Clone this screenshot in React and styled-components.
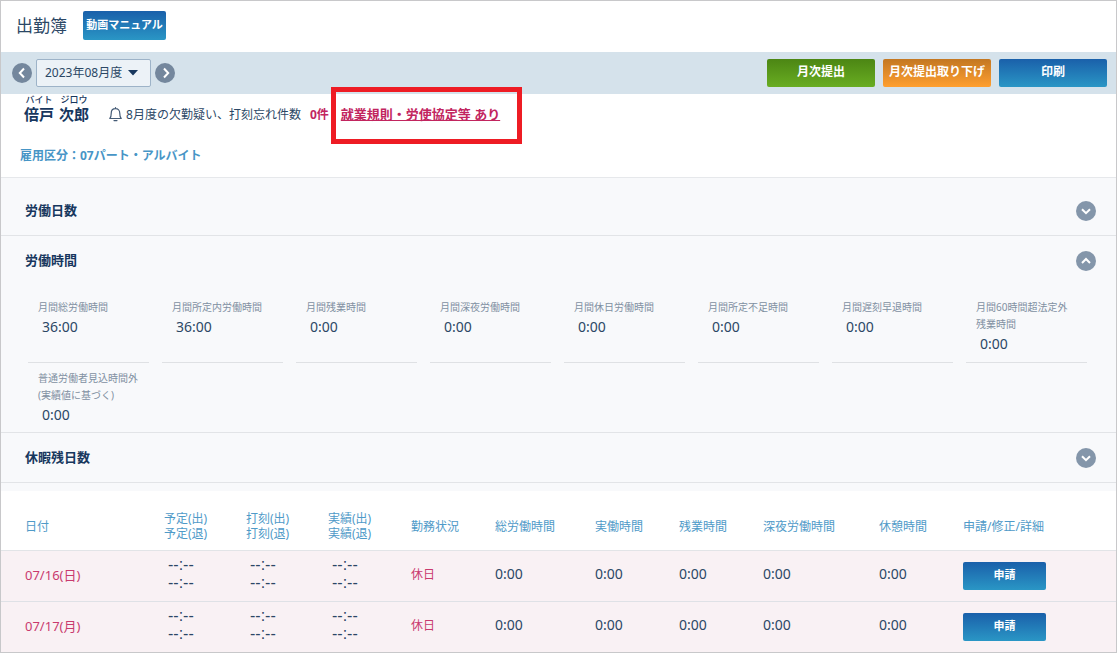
import React, { useState } from "react";
import styled, { createGlobalStyle } from "styled-components";

const summaryItems = [
  { label: ["月間総労働時間"], value: "36:00" },
  { label: ["月間所定内労働時間"], value: "36:00" },
  { label: ["月間残業時間"], value: "0:00" },
  { label: ["月間深夜労働時間"], value: "0:00" },
  { label: ["月間休日労働時間"], value: "0:00" },
  { label: ["月間所定不足時間"], value: "0:00" },
  { label: ["月間遅刻早退時間"], value: "0:00" },
  { label: ["月間60時間超法定外", "残業時間"], value: "0:00" },
  { label: ["普通労働者見込時間外", "(実績値に基づく)"], value: "0:00" },
];

// width is a share of the whole table, the last column takes the rest
const columns = [
  { lines: ["日付"], width: 163 },
  { lines: ["予定(出)", "予定(退)"], width: 82 },
  { lines: ["打刻(出)", "打刻(退)"], width: 82 },
  { lines: ["実績(出)", "実績(退)"], width: 83 },
  { lines: ["勤務状況"], width: 84 },
  { lines: ["総労働時間"], width: 100 },
  { lines: ["実働時間"], width: 84 },
  { lines: ["残業時間"], width: 84 },
  { lines: ["深夜労働時間"], width: 116 },
  { lines: ["休憩時間"], width: 84 },
  { lines: ["申請/修正/詳細"], width: 153 },
];

const days = [
  { date: "07/16(日)", status: "休日", times: ["0:00", "0:00", "0:00", "0:00", "0:00"] },
  { date: "07/17(月)", status: "休日", times: ["0:00", "0:00", "0:00", "0:00", "0:00"] },
];

const chevrons = {
  left: "M12 5.5 L7.8 10 L12 14.5",
  right: "M9 5.5 L13.2 10 L9 14.5",
  down: "M6 8.2 L10 12.2 L14 8.2",
  up: "M6 12 L10 8 L14 12",
};

function Chevron({ direction }) {
  return (
    <svg width="20" height="20" viewBox="0 0 20 20" aria-hidden="true">
      <path d={chevrons[direction]} fill="none" stroke="#fff" strokeWidth="2" />
    </svg>
  );
}

function Section({ title, open, onToggle, children }) {
  return (
    <SectionBox>
      <SectionHead>
        <SectionTitle>{title}</SectionTitle>
        <RoundButton type="button" aria-label={title} aria-expanded={open} onClick={onToggle}>
          <Chevron direction={open ? "up" : "down"} />
        </RoundButton>
      </SectionHead>
      {open && children}
    </SectionBox>
  );
}

function App() {
  const [openSections, setOpenSections] = useState({ days: false, hours: true, leave: false });
  const toggle = (key) => setOpenSections({ ...openSections, [key]: !openSections[key] });

  return (
    <Page>
      <GlobalStyle />
      <Header>
        <Title>出勤簿</Title>
        <ManualButton type="button">動画マニュアル</ManualButton>
      </Header>

      <Toolbar>
        <MonthNav>
          <RoundButton type="button" $dark aria-label="前月">
            <Chevron direction="left" />
          </RoundButton>
          <SelectWrap>
            <MonthSelect aria-label="対象月" defaultValue="2023-08">
              <option value="2023-08">2023年08月度</option>
            </MonthSelect>
            <Caret width="10" height="6" viewBox="0 0 10 6" aria-hidden="true">
              <path d="M0 0 H10 L5.5 5 Q5 5.5 4.5 5 Z" fill="#17375e" />
            </Caret>
          </SelectWrap>
          <RoundButton type="button" $dark aria-label="翌月">
            <Chevron direction="right" />
          </RoundButton>
        </MonthNav>
        <Actions>
          <ActionButton type="button" $color="green">月次提出</ActionButton>
          <ActionButton type="button" $color="orange">月次提出取り下げ</ActionButton>
          <ActionButton type="button">印刷</ActionButton>
        </Actions>
      </Toolbar>

      <Profile>
        <ProfileRow>
          <Name>
            <ruby>倍戸<rt>バイト</rt></ruby>
            <ruby>次郎<rt>ジロウ</rt></ruby>
          </Name>
          <Notice>
            <svg width="13" height="15" viewBox="0 0 13 15" aria-hidden="true">
              <path
                d="M6.5 0.6 V1.6 M0.8 11.5 C2 10.4 2.2 9.4 2.2 6.4 C2.2 3.4 4 1.6 6.5 1.6 C9 1.6 10.8 3.4 10.8 6.4 C10.8 9.4 11 10.4 12.2 11.5 Z M5 13.6 H8"
                fill="none"
                stroke="#435a75"
                strokeWidth="1.2"
                strokeLinejoin="round"
                strokeLinecap="round"
              />
            </svg>
            8月度の欠勤疑い、打刻忘れ件数
          </Notice>
          <Count>0件</Count>
          <Highlight>
            <RulesLink href="#rules">就業規則・労使協定等 あり</RulesLink>
          </Highlight>
        </ProfileRow>
        <Employment>雇用区分：07パート・アルバイト</Employment>
      </Profile>

      <Sections>
        <Section title="労働日数" open={openSections.days} onToggle={() => toggle("days")} />
        <Section title="労働時間" open={openSections.hours} onToggle={() => toggle("hours")}>
          <SummaryGrid>
            {summaryItems.map((item) => (
              <SummaryItem key={item.label[0]}>
                <SummaryLabel>
                  {item.label.map((line) => (
                    <Line key={line}>{line}</Line>
                  ))}
                </SummaryLabel>
                <SummaryValue>{item.value}</SummaryValue>
              </SummaryItem>
            ))}
          </SummaryGrid>
        </Section>
        <Section title="休暇残日数" open={openSections.leave} onToggle={() => toggle("leave")} />
      </Sections>

      <Table>
        <thead>
          <tr>
            {columns.map((column) => (
              <HeadCell key={column.lines[0]} scope="col" $width={column.width}>
                {column.lines.map((line) => (
                  <Line key={line}>{line}</Line>
                ))}
              </HeadCell>
            ))}
          </tr>
        </thead>
        <tbody>
          {days.map((day) => (
            <DayRow key={day.date}>
              <DateCell>{day.date}</DateCell>
              {["plan", "stamp", "actual"].map((key) => (
                <StampCell key={key}>
                  <Line>--:--</Line>
                  <Line>--:--</Line>
                </StampCell>
              ))}
              <StatusCell>{day.status}</StatusCell>
              {day.times.map((time, i) => (
                <TimeCell key={i}>{time}</TimeCell>
              ))}
              <Cell>
                <RequestButton type="button">申請</RequestButton>
              </Cell>
            </DayRow>
          ))}
        </tbody>
      </Table>
    </Page>
  );
}

const GlobalStyle = createGlobalStyle`
  * {
    box-sizing: border-box;
  }

  body {
    margin: 0;
    background: #fff;
    color: #2b4765;
    font-family: "Noto Sans", "Noto Sans CJK JP", sans-serif;
    font-size: 12px;
  }

  button,
  select {
    font-family: inherit;
  }
`;

const gradients = {
  blue: "linear-gradient(#1a60aa, #2a96c5)",
  green: "linear-gradient(#4c8614, #69ad22)",
  orange: "linear-gradient(#c37722, #ff9f2f)",
};

const Page = styled.div`
  min-height: 100vh;
  border: 1px solid #c8c8ca;
`;

const Header = styled.header`
  display: flex;
  align-items: center;
  gap: 16px;
  height: 51px;
  padding: 0 15px 2px;
`;

const Title = styled.h1`
  margin: 0;
  font-size: 17px;
  font-weight: 400;
  line-height: 24px;
`;

const Button = styled.button`
  display: flex;
  align-items: center;
  justify-content: center;
  height: 28px;
  padding: 0 0 2px;
  border: 0;
  border-radius: 2px;
  background: ${(props) => gradients[props.$color || "blue"]};
  color: #fff;
  font-size: 12px;
  font-weight: 700;
  line-height: 16px;
  white-space: nowrap;
  cursor: pointer;
`;

const ManualButton = styled(Button)`
  width: 83px;
  height: 29px;
  font-size: 11px;
`;

const ActionButton = styled(Button)`
  width: 108px;
`;

const RequestButton = styled(Button)`
  width: 83px;
  font-size: 11px;
`;

const Toolbar = styled.div`
  display: flex;
  align-items: center;
  justify-content: space-between;
  height: 42px;
  padding: 0 9px 0 11px;
  background: #d5e2eb;
`;

const MonthNav = styled.div`
  display: flex;
  align-items: center;
  gap: 4px;
`;

const Actions = styled.div`
  display: flex;
  gap: 8px;
`;

const RoundButton = styled.button`
  display: flex;
  width: 20px;
  height: 20px;
  padding: 0;
  border: 0;
  border-radius: 50%;
  background: ${(props) => (props.$dark ? "#74879d" : "#8496aa")};
  cursor: pointer;
`;

const SelectWrap = styled.div`
  position: relative;
`;

const MonthSelect = styled.select`
  display: block;
  width: 115px;
  height: 28px;
  padding: 0 28px 2px 8px;
  border: 1px solid #9db3c8;
  border-radius: 2px;
  background: #ecf2f7;
  color: #2b4765;
  font-size: 12px;
  appearance: none;
`;

const Caret = styled.svg`
  position: absolute;
  top: 11px;
  right: 13px;
  pointer-events: none;
`;

const Profile = styled.section`
  padding-bottom: 12px;
  border-bottom: 1px solid #e6e8eb;
`;

const ProfileRow = styled.div`
  display: flex;
  align-items: center;
  height: 40px;
  padding-left: 23px;
  white-space: nowrap;
`;

const Name = styled.div`
  display: flex;
  gap: 5px;
  margin-bottom: 12px;
  color: #17375e;
  font-size: 15px;
  font-weight: 700;
  line-height: 16px;

  ruby {
    display: flex;
    flex-direction: column-reverse;
    align-items: center;
  }

  rt {
    display: block;
    font-size: 9px;
    font-weight: 500;
    line-height: 12px;
  }
`;

const Notice = styled.div`
  display: flex;
  align-items: center;
  gap: 4px;
  margin-left: 20px;
`;

const Count = styled.div`
  margin-left: 9px;
  color: #c2255f;
  font-weight: 700;
`;

const Highlight = styled.div`
  position: relative;
  margin-left: 12px;

  &::after {
    content: "";
    position: absolute;
    inset: -17px -22px -20px -10px;
    border: 5px solid #ee1c24;
    pointer-events: none;
  }
`;

const RulesLink = styled.a`
  display: block;
  color: #c2255f;
  font-size: 13px;
  font-weight: 700;
  line-height: 20px;
  text-decoration: underline;
`;

const Employment = styled.div`
  margin-top: 13px;
  padding-left: 19px;
  color: #4795c6;
  font-weight: 700;
  line-height: 18px;
`;

const Sections = styled.div`
  padding: 8px 0;
  background: #f8f9fb;
`;

const SectionBox = styled.section`
  border-bottom: 1px solid #e2e4e7;
`;

const SectionHead = styled.div`
  display: flex;
  align-items: center;
  justify-content: space-between;
  height: 49px;
  padding: 0 20px 0 24px;
`;

const SectionTitle = styled.h2`
  margin: 0;
  padding-bottom: 2px;
  color: #17375e;
  font-size: 13px;
  font-weight: 700;
  line-height: 20px;
`;

const SummaryGrid = styled.dl`
  display: grid;
  grid-template-columns: repeat(8, 1fr);
  column-gap: 13px;
  margin: 0;
  padding: 7px 29px 0 27px;
`;

const SummaryItem = styled.div`
  padding: 7px 0 7px 10px;
  border-bottom: 1px solid #dfe1e4;
  white-space: nowrap;

  &:last-child {
    padding-bottom: 6px;
    border-bottom: 0;
  }
`;

const SummaryLabel = styled.dt`
  color: #8190a2;
  font-size: 10px;
  line-height: 17px;
`;

const SummaryValue = styled.dd`
  margin: 0;
  padding-left: 4px;
  font-size: 14px;
  line-height: 22px;
`;

const Line = styled.span`
  display: block;
`;

const Table = styled.table`
  width: 100%;
  border-collapse: separate;
  border-spacing: 0;
  table-layout: fixed;
  white-space: nowrap;
`;

const HeadCell = styled.th`
  width: ${(props) => (props.$width / 1115) * 100}%;
  height: 60px;
  padding: 11px 0 0;
  border-bottom: 1px solid #e2e4e7;
  color: #4f9ac8;
  font-weight: 400;
  line-height: 15px;
  text-align: left;

  &:first-child {
    padding-left: 24px;
  }
`;

const Cell = styled.td`
  height: 51px;
  padding: 0;
  border-bottom: 1px solid #dfe1e6;
`;

const DayRow = styled.tr`
  background: #f9f1f4;

  &:last-child ${Cell} {
    height: 50px;
    border-bottom: 0;
  }
`;

const DateCell = styled(Cell)`
  padding: 0 0 4px 24px;
  color: #c93a6e;
  font-size: 13px;
`;

const StampCell = styled(Cell)`
  padding: 0 0 4px 4px;
  font-family: "Liberation Sans", sans-serif;
  font-size: 16px;
  line-height: 18px;
`;

const StatusCell = styled(Cell)`
  padding-bottom: 4px;
  color: #c93a6e;
`;

const TimeCell = styled(Cell)`
  padding-bottom: 6px;
  font-size: 14px;
`;

export default App;
